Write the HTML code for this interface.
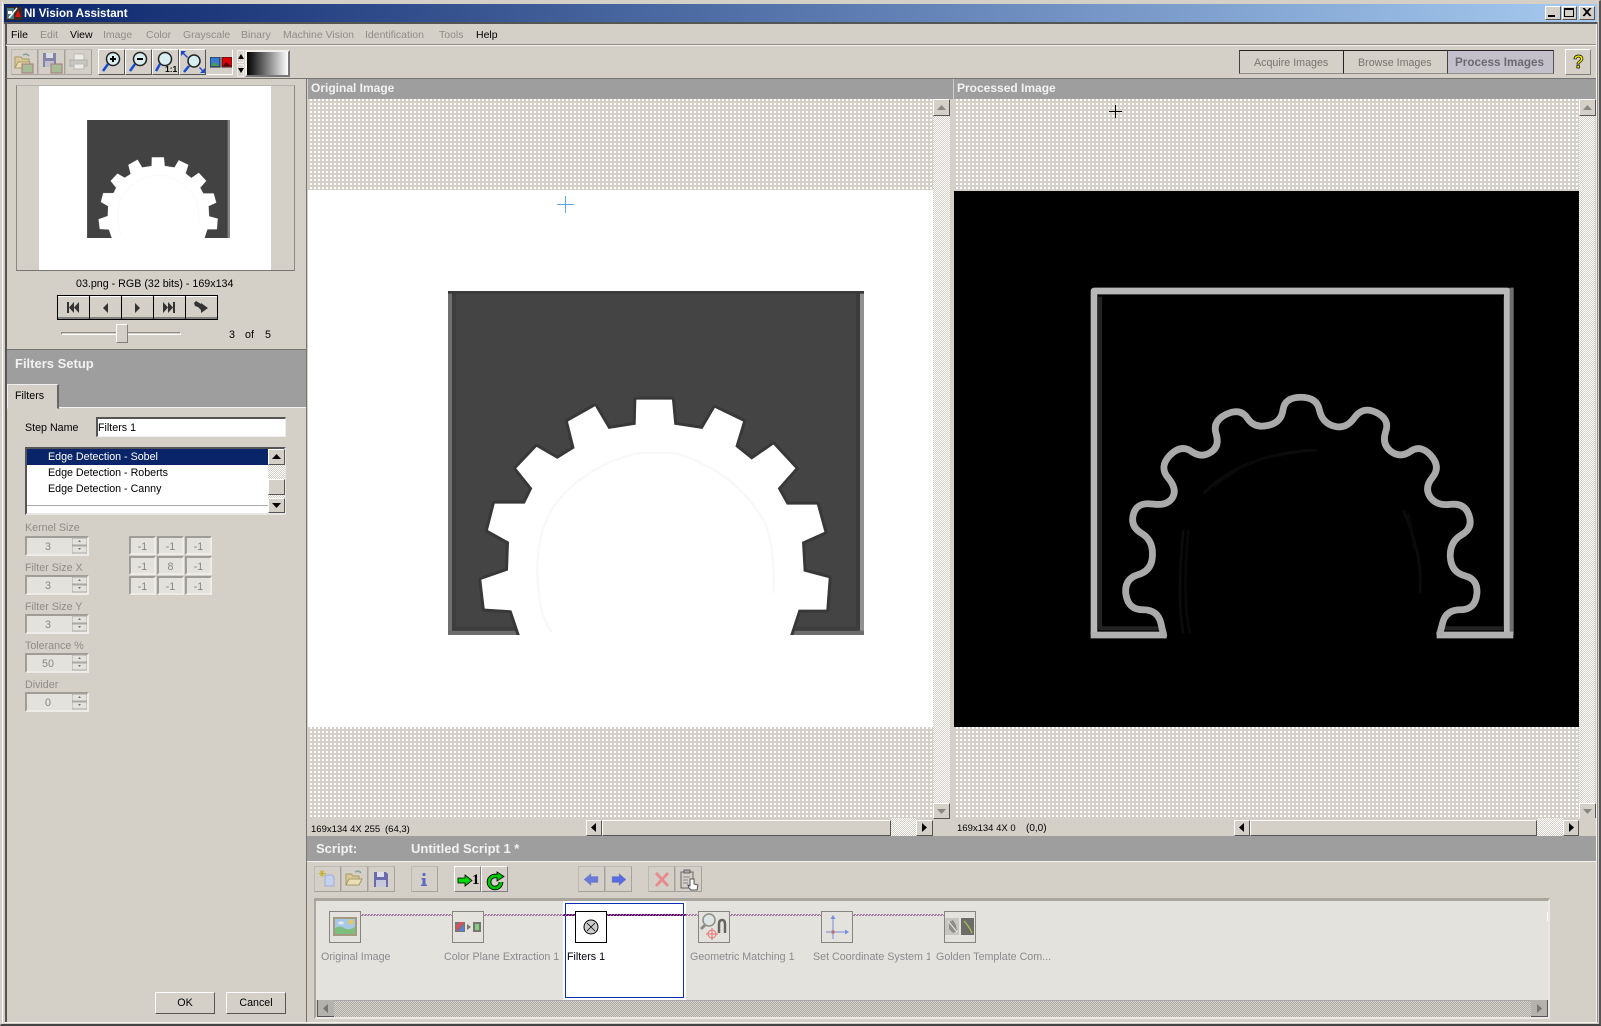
<!DOCTYPE html>
<html><head><meta charset="utf-8"><title>NI Vision Assistant</title>
<style>
html,body{margin:0;padding:0;width:1601px;height:1026px;overflow:hidden;background:#d4d0c8}
#r{position:relative;width:1601px;height:1026px;overflow:hidden;background:#d4d0c8;font:10.7px "Liberation Sans",sans-serif;color:#000}
#r div,#r svg{position:absolute;box-sizing:border-box}
.t{white-space:nowrap;line-height:14px;height:14px}
.g{color:#8f8d87}
.m{font-size:10.5px}
.h{font-weight:bold;color:#f2f2f2;font-size:12px}
.gray{background:#9e9e9e}
.dots{background-color:#d4d0c8;background-image:conic-gradient(#fff 25%,transparent 0);background-size:4px 4px}
.hat{background-color:#d4d0c8;background-image:conic-gradient(#fff 25%,#d4d0c8 0 50%,#fff 0 75%,#d4d0c8 0);background-size:2px 2px}
.hat2{background-color:#bdbab4;background-image:conic-gradient(#d6d3cd 25%,#aeaba5 0 50%,#d6d3cd 0 75%,#aeaba5 0);background-size:2px 2px}
.b{background:#d4d0c8;border:1px solid;border-color:#fff #555 #555 #fff}
.bf{background:#d4d0c8;border:1px solid;border-color:#bdbab3 #a5a29b #a5a29b #bdbab3}
.bu{background:#d4d0c8;border:1px solid;border-color:#fff #808080 #808080 #fff}
.sp{background:#e3e2dd;border:2px solid;border-color:#a09d97 #eeece8 #eeece8 #a09d97;color:#8a8780;text-align:center;line-height:18px}
.c{background:#e3e2dd;border:2px solid;border-color:#a09d97 #eeece8 #eeece8 #a09d97;color:#8a8780;text-align:center;line-height:18px}
.ib{background:#e3e2dd;border:1px solid #86847e}
</style></head><body><div id="r">

<!-- window frame -->
<div style="left:0;top:0;width:1601px;height:1026px;border:1px solid #d4d0c8;border-right:2px solid #555;border-bottom:2px solid #444"></div>
<div style="left:2px;top:2px;width:1px;height:1021px;background:#fff"></div>
<div style="left:5px;top:22px;width:2px;height:1000px;background:#555"></div>
<div style="left:1596px;top:22px;width:1px;height:1000px;background:#f4f2ee"></div>
<div style="left:1597px;top:22px;width:1px;height:1000px;background:#8f8d87"></div>
<div style="left:4px;top:1022px;width:1593px;height:1px;background:#f4f2ee"></div>

<!-- title bar -->
<div style="left:4px;top:4px;width:1593px;height:18px;background:linear-gradient(90deg,#0a246a,#a6caf0)"></div>
<div style="left:6px;top:7px;width:16px;height:13px;background:#3a2a1a"></div>
<svg style="left:6px;top:7px" width="16" height="13" viewBox="0 0 16 13"><rect x="1" y="1" width="7" height="11" fill="#4a7a8a"/><path d="M2 4h4v3h-4z" fill="#fff"/><path d="M3 11L11 1" stroke="#fff" stroke-width="1.5"/><path d="M9 10l3-7 3 7z" fill="#e01010"/></svg>
<div class="t" style="left:24px;top:7px;color:#fff;font-weight:bold;font-size:11.5px">NI Vision Assistant</div>
<div class="b" style="left:1545px;top:6px;width:16px;height:14px"></div><div style="left:1548px;top:15px;width:7px;height:2px;background:#000"></div>
<div class="b" style="left:1562px;top:6px;width:15px;height:14px"></div><div style="left:1564px;top:8px;width:10px;height:9px;border:1px solid #000;border-top-width:2px"></div>
<div class="b" style="left:1579px;top:6px;width:16px;height:14px"></div>
<svg style="left:1582px;top:8px" width="10" height="9"><path d="M1 0L8 8M2 0L9 8M8 0L1 8M9 0L2 8" stroke="#000"/></svg>
<div style="left:4px;top:22px;width:1593px;height:2px;background:#555"></div>

<!-- menu -->
<div class="t m" style="left:11px;top:28px">File</div>
<div class="t g m" style="left:40px;top:28px">Edit</div>
<div class="t m" style="left:70px;top:28px">View</div>
<div class="t g m" style="left:103px;top:28px">Image</div>
<div class="t g m" style="left:146px;top:28px">Color</div>
<div class="t g m" style="left:183px;top:28px">Grayscale</div>
<div class="t g m" style="left:241px;top:28px">Binary</div>
<div class="t g m" style="left:283px;top:28px">Machine Vision</div>
<div class="t g m" style="left:365px;top:28px">Identification</div>
<div class="t g m" style="left:439px;top:28px">Tools</div>
<div class="t m" style="left:476px;top:28px">Help</div>
<div style="left:6px;top:44px;width:1590px;height:1px;background:#8f8d87"></div>
<div style="left:6px;top:45px;width:1590px;height:1px;background:#f4f2ee"></div>

<!-- toolbar -->
<div class="bf" style="left:11px;top:49px;width:27px;height:26px"></div>
<div class="bf" style="left:38px;top:49px;width:27px;height:26px"></div>
<div class="bf" style="left:65px;top:49px;width:27px;height:26px"></div>
<svg style="left:14px;top:51px" width="24" height="24" viewBox="0 0 24 24"><path d="M1 6h6l2 2h6v9H1z" fill="#d8c898" stroke="#a89a6a"/><path d="M1 17l3-6h12l-2 6z" fill="#e8dcb0" stroke="#a89a6a"/><path d="M9 4q4-2 6 1" fill="none" stroke="#8aa0a0" stroke-width="1.5"/><rect x="8" y="13" width="11" height="9" fill="#a8bc98" stroke="#a87878"/></svg>
<svg style="left:42px;top:52px" width="21" height="22" viewBox="0 0 21 22"><path d="M1 1h13v14H1z" fill="#8484a8"/><rect x="4" y="1" width="7" height="5" fill="#dcdce4"/><rect x="3" y="9" width="9" height="6" fill="#c0c0d0"/><rect x="9" y="12" width="11" height="9" fill="#a8bc98" stroke="#a87878"/></svg>
<svg style="left:69px;top:53px" width="20" height="18" viewBox="0 0 20 18"><rect x="5" y="1" width="10" height="6" fill="#ecece8" stroke="#bab8b2"/><path d="M1 7h17v6H1z" fill="#c9c7c1" stroke="#aeaca6"/><rect x="5" y="11" width="10" height="5" fill="#ecece8" stroke="#bab8b2"/></svg>

<div class="b" style="left:98px;top:49px;width:27px;height:26px"></div>
<div class="b" style="left:125px;top:49px;width:27px;height:26px"></div>
<div class="b" style="left:152px;top:49px;width:27px;height:26px"></div>
<div class="b" style="left:179px;top:49px;width:27px;height:26px"></div>
<div style="left:206px;top:49px;width:27px;height:26px;border:1px solid;border-color:#d4d0c8 #fff #fff #d4d0c8;background:#d4d0c8"></div>
<svg style="left:100px;top:50px" width="24" height="24" viewBox="0 0 24 24"><circle cx="13" cy="9" r="6.5" fill="#d8eef0" stroke="#222" stroke-width="1.5"/><path d="M8 14L3 21" stroke="#1a4ad0" stroke-width="2.500"/><path d="M10 9h6M13 6v6" stroke="#000" stroke-width="2"/></svg>
<svg style="left:127px;top:50px" width="24" height="24" viewBox="0 0 24 24"><circle cx="13" cy="9" r="6.5" fill="#d8eef0" stroke="#222" stroke-width="1.5"/><path d="M8 14L3 21" stroke="#1a4ad0" stroke-width="2.500"/><path d="M10 9h6" stroke="#000" stroke-width="2"/></svg>
<svg style="left:154px;top:50px" width="24" height="24" viewBox="0 0 24 24"><circle cx="11" cy="9" r="6.5" fill="#d8eef0" stroke="#222" stroke-width="1.5"/><path d="M6 14L2 21" stroke="#1a4ad0" stroke-width="2.500"/></svg>
<div class="t" style="left:165px;top:64px;font-size:8.500px;font-weight:bold;line-height:10px;height:10px">1:1</div>
<svg style="left:180px;top:50px" width="26" height="24" viewBox="0 0 26 24"><circle cx="14" cy="11" r="6" fill="#d8eef0" stroke="#222" stroke-width="1.5"/><path d="M9 16L4 22" stroke="#1a4ad0" stroke-width="2.500"/><path d="M1 1h5l-2 2 4 4-1 1-4-4-2 2zM25 23h-5l2-2-3-3 1-1 3 3 2-2z" fill="#1a4ad0"/></svg>
<svg style="left:210px;top:57px" width="22" height="11" viewBox="0 0 22 11"><rect width="10" height="10" x="0" y="0" fill="#3a7ad0" stroke="#222"/><path d="M1 9l3-4 5 4z" fill="#4aa04a"/><rect width="10" height="10" x="12" y="0" fill="#e00000" stroke="#222"/><path d="M13 9l3-4 5 4z" fill="#500"/></svg>
<div style="left:237px;top:50px;width:7px;height:13px;background:#d8d4cc;border:1px solid #eee;color:#000"></div>
<svg style="left:238px;top:54px" width="6" height="5"><path d="M3 0l3 5H0z"/></svg>
<div style="left:237px;top:64px;width:7px;height:13px;background:#d8d4cc;border:1px solid #eee"></div>
<svg style="left:238px;top:68px" width="6" height="5"><path d="M0 0h6L3 5z"/></svg>
<div style="left:245px;top:50px;width:45px;height:27px;border:2px solid;border-color:#f2f0ec #777 #777 #f2f0ec;background:linear-gradient(90deg,#000,#fff)"></div>

<!-- right mode tabs -->
<div style="left:1239px;top:50px;width:105px;height:24px;border:1px solid;border-color:#222 #222 #8f8d87 #444"></div>
<div style="left:1344px;top:50px;width:103px;height:24px;border-top:1px solid #222;border-bottom:1px solid #8f8d87"></div>
<div style="left:1447px;top:50px;width:107px;height:24px;background:#c3c0cc;border:1px solid;border-color:#222 #555 #8f8d87 #444"></div>
<div class="t" style="left:1254px;top:56px;color:#77756f">Acquire Images</div>
<div class="t" style="left:1358px;top:56px;color:#77756f">Browse Images</div>
<div class="t" style="left:1455px;top:56px;color:#6a6a70;font-weight:bold;font-size:11.7px">Process Images</div>
<div class="bu" style="left:1565px;top:49px;width:26px;height:26px"></div>
<div class="t" style="left:1573px;top:52px;font-size:18px;font-weight:bold;color:#f8f000;line-height:20px;height:20px;-webkit-text-stroke:.7px #000">?</div>

<div style="left:6px;top:78px;width:1590px;height:1px;background:#77756f"></div>

<!-- left preview -->
<div style="left:16px;top:85px;width:279px;height:186px;border:1px solid;border-color:#b5b3ad #8a8882 #77756f #8a8882"></div>
<div style="left:39px;top:86px;width:232px;height:184px;background:#fff"></div>
<svg style="left:87px;top:120px" width="143" height="118" viewBox="84 -207 1248 1031"><rect x="84" y="-207" width="1248" height="1031" fill="#424242"/><rect x="1312" y="-207" width="20" height="1031" fill="#888"/><use href="#gear"/></svg>
<div class="t" style="left:76px;top:277px">03.png - RGB (32 bits) - 169x134</div>

<div style="left:57px;top:295px;width:161px;height:25px;border:1px solid #000;background:#d4d0c8;border-bottom-width:1px"></div>
<div style="left:58px;top:296px;width:159px;height:23px;background:#d4d0c8;border-top:1px solid #fff;border-bottom:2px solid #808080"></div>
<div style="left:89px;top:295px;width:1px;height:25px;background:#000"></div>
<div style="left:121px;top:295px;width:1px;height:25px;background:#000"></div>
<div style="left:153px;top:295px;width:1px;height:25px;background:#000"></div>
<div style="left:185px;top:295px;width:1px;height:25px;background:#000"></div>
<svg style="left:57px;top:295px" width="161" height="25" viewBox="0 0 161 25" fill="#333"><path d="M10 7h2v11h-2zM17 7v11l-5-5.500zM22 7v11l-5-5.500z"/><path d="M51 8v10l-5-5z"/><path d="M78 8v10l5-5z"/><path d="M106 7v11l5-5.500zM111 7v11l5-5.500zM116 7h2v11h-2z"/><path d="M137 8l2-2 5 3V8l7 5-7 5v-3l-3-3-3-1z"/></svg>

<div style="left:61px;top:332px;width:120px;height:3px;border:1px solid;border-color:#8f8d87 #fff #fff #8f8d87"></div>
<div class="bu" style="left:116px;top:324px;width:12px;height:19px"></div>
<div class="t" style="left:229px;top:328px">3</div><div class="t" style="left:245px;top:328px">of</div><div class="t" style="left:265px;top:328px">5</div>

<!-- Filters Setup -->
<div class="gray" style="left:7px;top:349px;width:299px;height:59px;border-top:1px solid #77756f"></div>
<div class="t h" style="left:15px;top:357px;font-size:13px">Filters Setup</div>
<div style="left:7px;top:384px;width:52px;height:25px;background:#d4d0c8;border:1px solid;border-color:#eee #666 #d4d0c8 #eee;border-right-width:2px"></div>
<div class="t" style="left:15px;top:389px">Filters</div>
<div style="left:59px;top:407px;width:247px;height:1px;background:#f4f2ee"></div>
<div style="left:306px;top:79px;width:1px;height:943px;background:#77756f"></div>

<div class="t" style="left:25px;top:421px">Step Name</div>
<div style="left:96px;top:417px;width:190px;height:20px;background:#fff;border:1px solid;border-color:#555 #eee #eee #555;border-width:2px 1px 1px 2px"></div>
<div class="t" style="left:98px;top:421px">Filters 1</div>

<div style="left:25px;top:447px;width:261px;height:68px;background:#fff;border:2px solid;border-color:#555 #e8e6e2 #e8e6e2 #555"></div>
<div style="left:27px;top:449px;width:241px;height:16px;background:#0a246a"></div>
<div class="t" style="left:48px;top:450px;color:#fff">Edge Detection - Sobel</div>
<div class="t" style="left:48px;top:466px">Edge Detection - Roberts</div>
<div class="t" style="left:48px;top:482px">Edge Detection - Canny</div>
<div style="left:27px;top:505px;width:241px;height:1px;background:#aaa"></div>
<div class="hat" style="left:268px;top:449px;width:17px;height:64px"></div>
<div class="b" style="left:268px;top:449px;width:17px;height:16px"></div><svg style="left:272px;top:454px" width="9" height="5"><path d="M4.500 0L9 5H0z"/></svg>
<div class="b" style="left:268px;top:479px;width:17px;height:16px"></div>
<div class="b" style="left:268px;top:498px;width:17px;height:15px"></div><svg style="left:272px;top:503px" width="9" height="5"><path d="M0 0h9L4.500 5z"/></svg>

<!-- params -->
<div class="t g" style="left:25px;top:521px">Kernel Size</div>
<div class="sp" style="left:25px;top:536px;width:64px;height:20px;padding-right:18px">3</div>
<div class="t g" style="left:25px;top:561px">Filter Size X</div>
<div class="sp" style="left:25px;top:575px;width:64px;height:20px;padding-right:18px">3</div>
<div class="t g" style="left:25px;top:600px">Filter Size Y</div>
<div class="sp" style="left:25px;top:614px;width:64px;height:20px;padding-right:18px">3</div>
<div class="t g" style="left:25px;top:639px">Tolerance %</div>
<div class="sp" style="left:25px;top:653px;width:64px;height:20px;padding-right:18px">50</div>
<div class="t g" style="left:25px;top:678px">Divider</div>
<div class="sp" style="left:25px;top:692px;width:64px;height:20px;padding-right:18px">0</div>
<svg style="left:72px;top:536px" width="15" height="176" viewBox="0 0 15 176"><g id="s"><rect y="2" width="15" height="7" fill="#e3e2dd" stroke="#aaa8a2"/><rect y="10" width="15" height="7" fill="#e3e2dd" stroke="#aaa8a2"/><path d="M6 6h3L7.500 4zM6 12h3L7.500 14z" fill="#77756f"/></g><use href="#s" y="39"/><use href="#s" y="78"/><use href="#s" y="117"/><use href="#s" y="156"/></svg>

<div class="c" style="left:129px;top:536px;width:27px;height:19px">-1</div>
<div class="c" style="left:157px;top:536px;width:27px;height:19px">-1</div>
<div class="c" style="left:185px;top:536px;width:27px;height:19px">-1</div>
<div class="c" style="left:129px;top:556px;width:27px;height:19px">-1</div>
<div class="c" style="left:157px;top:556px;width:27px;height:19px">8</div>
<div class="c" style="left:185px;top:556px;width:27px;height:19px">-1</div>
<div class="c" style="left:129px;top:576px;width:27px;height:19px">-1</div>
<div class="c" style="left:157px;top:576px;width:27px;height:19px">-1</div>
<div class="c" style="left:185px;top:576px;width:27px;height:19px">-1</div>

<div class="b" style="left:155px;top:992px;width:60px;height:22px;text-align:center;line-height:20px">OK</div>
<div class="b" style="left:226px;top:992px;width:60px;height:22px;text-align:center;line-height:20px">Cancel</div>

<!-- image headers -->
<div class="gray" style="left:308px;top:79px;width:645px;height:20px"></div>
<div class="gray" style="left:954px;top:79px;width:642px;height:20px"></div>
<div class="t h" style="left:311px;top:81px">Original Image</div>
<div class="t h" style="left:957px;top:81px">Processed Image</div>

<!-- left image pane -->
<div class="dots" style="left:308px;top:99px;width:625px;height:719px"></div>
<div style="left:308px;top:190px;width:625px;height:537px;background:#fff"></div>
<svg style="left:448px;top:291px" width="416" height="344" viewBox="84 -207 1248 1032">
<defs><g id="gear"><path d="M300 824L275 750 195 745 185 660 265 632 268 545 205 510 225 432 315 432 338 385 290 325 350 262 412 298 465 265 445 185 525 140 565 208 648 195 650 120 755 120 762 195 848 208 885 145 968 185 945 260 995 300 1060 255 1125 325 1072 385 1100 435 1190 435 1212 515 1145 545 1150 635 1225 655 1218 748 1135 748 1110 824Z" fill="#fff" stroke="#fff" stroke-width="2" stroke-linejoin="round"/><path d="M395 818Q355 760 352 640 350 520 400 440 490 320 650 280L770 280Q960 340 1040 500 1065 580 1060 700" fill="none" stroke="#f8f8f8" stroke-width="7"/></g></defs>
<rect x="84" y="-207" width="1248" height="1032" fill="#444"/>
<rect x="84" y="-207" width="12" height="1032" fill="#707070"/>
<rect x="96" y="-207" width="12" height="1020" fill="#3e3e3e"/>
<rect x="1320" y="-207" width="12" height="1032" fill="#929292"/>
<rect x="1308" y="-207" width="12" height="1020" fill="#3c3c3c"/>
<rect x="84" y="-207" width="1248" height="8" fill="#3a3a3a"/>
<rect x="84" y="812" width="1248" height="13" fill="#6c6c6c"/>
<rect x="96" y="800" width="1224" height="12" fill="#3c3c3c"/>
<path d="M300 824L275 750 195 745 185 660 265 632 268 545 205 510 225 432 315 432 338 385 290 325 350 262 412 298 465 265 445 185 525 140 565 208 648 195 650 120 755 120 762 195 848 208 885 145 968 185 945 260 995 300 1060 255 1125 325 1072 385 1100 435 1190 435 1212 515 1145 545 1150 635 1225 655 1218 748 1135 748 1110 824" fill="none" stroke="#383838" stroke-width="20" stroke-linejoin="round"/>
<use href="#gear"/>
</svg>
<svg style="left:557px;top:196px" width="17" height="17"><path d="M8.500 0v17M0 8.500h17" stroke="#58a8f0" stroke-width="1"/></svg>

<!-- right image pane -->
<div class="dots" style="left:954px;top:99px;width:625px;height:719px"></div>
<div style="left:954px;top:191px;width:625px;height:536px;background:#000"></div>
<svg style="left:1070px;top:270px" width="460" height="400" viewBox="0 -300 1380 1200">
<g fill="none" stroke-linejoin="round">
<path d="M90 -220V775H275M1110 775H1305V-220" stroke="#242424" stroke-width="12"/>
<path d="M72 795V-237H1312V795" stroke="#b8b8b8" stroke-width="20"/>
<path d="M1325 -247V795" stroke="#6e6e6e" stroke-width="12"/>
<path d="M62 795H290M1100 795H1330" stroke="#b0b0b0" stroke-width="20"/>
<path d="M340 790Q320 690 340 480M1050 670Q1060 560 1000 420M400 370Q520 250 740 240" stroke="#0c0c0c" stroke-width="8"/>
<path d="M360 790Q335 690 355 480M1035 540L1015 430M430 350Q540 260 640 255" stroke="#090909" stroke-width="8"/>
<path transform="translate(690 500) scale(1.02) translate(-690 -500)" d="M290 795L281 755Q272 715 228 715Q185 715 178 670Q172 625 213 612Q255 600 256 555Q258 510 224 490Q190 470 200 434Q210 398 255 404Q300 410 315 385Q330 360 302 327Q275 295 307 261Q340 228 370 249Q400 270 427 252Q455 235 443 197Q432 160 473 140Q515 120 535 151Q555 182 595 173Q635 165 640 127Q645 90 692 90Q740 90 747 127Q755 165 790 175Q825 185 850 150Q875 115 915 135Q955 155 942 191Q930 228 957 249Q985 270 1015 249Q1045 228 1075 261Q1105 295 1080 325Q1055 355 1072 382Q1090 410 1132 405Q1175 400 1187 437Q1200 475 1165 495Q1130 515 1132 560Q1135 605 1175 615Q1215 625 1210 670Q1205 715 1162 715Q1120 715 1110 752L1100 790" stroke="#aaa" stroke-width="20"/>
</g></svg>
<svg style="left:1107px;top:103px" width="17" height="17"><path d="M8.500 2v13M2 8.500h13" stroke="#000" stroke-width="1"/></svg>

<!-- vertical scrollbars -->
<div class="hat" style="left:933px;top:116px;width:17px;height:687px"></div>
<div class="hat" style="left:1579px;top:116px;width:16px;height:687px"></div>
<div class="b" style="left:933px;top:99px;width:17px;height:17px"></div><svg style="left:937px;top:105px" width="9" height="5"><path d="M4.500 0L9 5H0z" fill="#8a8882"/></svg>
<div class="b" style="left:933px;top:803px;width:17px;height:16px"></div><svg style="left:937px;top:809px" width="9" height="5"><path d="M0 0h9L4.500 5z" fill="#8a8882"/></svg>
<div class="b" style="left:1579px;top:99px;width:17px;height:17px"></div><svg style="left:1583px;top:105px" width="9" height="5"><path d="M4.500 0L9 5H0z" fill="#8a8882"/></svg>
<div class="b" style="left:1579px;top:803px;width:17px;height:16px"></div><svg style="left:1583px;top:809px" width="9" height="5"><path d="M0 0h9L4.500 5z" fill="#8a8882"/></svg>

<!-- status -->
<div style="left:308px;top:818px;width:625px;height:18px;background:#d4d0c8"></div>
<div style="left:954px;top:818px;width:642px;height:18px;background:#d4d0c8"></div>
<div class="t" style="left:311px;top:823px;font-size:9.500px">169x134 4X 255</div>
<div class="t" style="left:385px;top:823px;font-size:9.500px">(64,3)</div>
<div class="t" style="left:957px;top:822px;font-size:9.500px">169x134 4X 0</div>
<div class="t" style="left:1026px;top:822px;font-size:10px">(0,0)</div>

<!-- h scrollbars -->
<div class="b" style="left:586px;top:820px;width:16px;height:16px"></div><svg style="left:591px;top:823px" width="5" height="9"><path d="M5 0v9L0 4.500z"/></svg>
<div class="b" style="left:602px;top:820px;width:289px;height:16px"></div>
<div class="hat" style="left:891px;top:818px;width:25px;height:18px"></div>
<div class="b" style="left:916px;top:820px;width:17px;height:16px"></div><svg style="left:922px;top:823px" width="5" height="9"><path d="M0 0v9L5 4.500z"/></svg>
<div class="b" style="left:1234px;top:820px;width:16px;height:16px"></div><svg style="left:1239px;top:823px" width="5" height="9"><path d="M5 0v9L0 4.500z"/></svg>
<div class="b" style="left:1250px;top:820px;width:287px;height:16px"></div>
<div class="hat" style="left:1537px;top:818px;width:26px;height:18px"></div>
<div class="b" style="left:1563px;top:820px;width:16px;height:16px"></div><svg style="left:1569px;top:823px" width="5" height="9"><path d="M0 0v9L5 4.500z"/></svg>

<!-- script header -->
<div class="gray" style="left:307px;top:836px;width:1289px;height:25px"></div>
<div style="left:307px;top:861px;width:1289px;height:1px;background:#f4f2ee"></div>
<div class="t h" style="left:316px;top:842px;font-size:13px">Script:</div>
<div class="t h" style="left:411px;top:842px;font-size:13px">Untitled Script 1 *</div>

<!-- script toolbar -->
<div class="bf" style="left:314px;top:866px;width:27px;height:26px"></div>
<div class="bf" style="left:341px;top:866px;width:27px;height:26px"></div>
<div class="bf" style="left:368px;top:866px;width:27px;height:26px"></div>
<div class="bf" style="left:411px;top:866px;width:27px;height:26px"></div>
<div class="b" style="left:454px;top:866px;width:27px;height:26px;border-right-color:#808080;border-bottom-color:#808080"></div>
<div class="b" style="left:481px;top:866px;width:27px;height:26px;border-right-color:#808080;border-bottom-color:#808080"></div>
<div class="bf" style="left:578px;top:866px;width:27px;height:26px"></div>
<div class="bf" style="left:605px;top:866px;width:27px;height:26px"></div>
<div class="bf" style="left:648px;top:866px;width:27px;height:26px"></div>
<div class="bf" style="left:675px;top:866px;width:27px;height:26px"></div>
<svg style="left:314px;top:866px" width="400" height="26" viewBox="0 0 400 26">
<path d="M11 9h7l2 2v9H11z" fill="#c4d0ec" stroke="#a0aed0"/><path d="M8 4v7M5 7.500h7M6 5l4 5M10 5l-4 5" stroke="#c8b030"/>
<path d="M32 8h5l2 2h6v9H32z" fill="#d8c898" stroke="#a89a6a"/><path d="M32 19l3-6h13l-3 6z" fill="#eadfb4" stroke="#a89a6a"/><path d="M41 6q4-2 6 1" fill="none" stroke="#8aa0a0" stroke-width="1.500"/>
<path d="M60 6h12l2 2v13H60z" fill="#6c6cac"/><rect x="63" y="6" width="7" height="5" fill="#dcdcea"/><rect x="62" y="14" width="10" height="7" fill="#c8c8dc"/>
<circle cx="110" cy="8.500" r="1.600" fill="#5a6ac8"/><path d="M107.500 12h4v6.500h1.500V20h-6v-1.500h1.500V13.500h-1z" fill="#5a6ac8"/>
<path d="M144 12h7V9l7 5.500-7 5.500v-3h-7z" fill="#00d800" stroke="#000" stroke-width=".8"/>
<g fill="none"><path d="M187 16A6 6 0 1 1 181 10H184" stroke="#000" stroke-width="4.600"/></g>
<path d="M183 6L190 10.500 183 15z" fill="#00c800" stroke="#000" stroke-width=".8"/>
<path d="M187 16A6 6 0 1 1 181 10H184" fill="none" stroke="#00c800" stroke-width="2.800"/>
<path d="M270 13.500l7-6v3h7v6h-7v3z" fill="#6a7ad8" stroke="#8090b0" stroke-width=".5"/>
<path d="M312 13.500l-7-6v3h-7v6h7v3z" fill="#5a6ae0" stroke="#8090b0" stroke-width=".5"/>
<path d="M342 7l12 13M354 7L342 20" stroke="#e88a90" stroke-width="2.800"/>
<rect x="367" y="6" width="12" height="16" fill="#d4d0c8" stroke="#666"/><rect x="370" y="4" width="6" height="3" fill="#aaa" stroke="#666"/><path d="M369 11h7M369 14h5M369 17h5" stroke="#888"/>
<path d="M376 13v7l-2-1 1 3 2 2h6l1-5-4-1v-5z" fill="#fff" stroke="#555"/>
</svg>
<div class="t" style="left:472px;top:872px;font:bold 15px 'Liberation Serif',serif;line-height:16px;height:16px">1</div>

<!-- strip -->
<div style="left:314px;top:898px;width:1236px;height:121px;border:2px solid;border-color:#a9a69f #ece9e4 #ece9e4 #a9a69f;border-top-width:3px"></div>
<div style="left:316px;top:901px;width:1232px;height:99px;background:#e3e2dd"></div>
<div style="left:563px;top:901px;width:123px;height:99px;background:#fff"></div>
<div style="left:565px;top:903px;width:119px;height:95px;border:1px solid #0a2eb5"></div>
<svg style="left:361px;top:912px" width="600" height="6" viewBox="0 0 600 6"><g fill="none"><path d="M0 3.500H583" stroke="#a47aa4" stroke-dasharray="2 1"/><path d="M1 2.500H583" stroke="#a47aa4" stroke-dasharray="2 1"/><path d="M202 3.500H325" stroke="#5a0a6a" stroke-dasharray="2 1"/><path d="M203 2.500H325" stroke="#5a0a6a" stroke-dasharray="2 1"/></g></svg>

<div class="ib" style="left:329px;top:911px;width:32px;height:32px"></div>
<svg style="left:333px;top:916px" width="24" height="22" viewBox="0 0 24 22"><rect width="24" height="19" y="1" fill="#a49a80"/><rect x="2" y="3" width="20" height="15" fill="#a8c8e8"/><path d="M2 18v-6q5-3 9 0t11-1v7z" fill="#7cbf7c"/><circle cx="18" cy="6" r="2.500" fill="#e8c860"/><ellipse cx="8" cy="7" rx="3" ry="1.500" fill="#e8e8e8"/></svg>
<div class="ib" style="left:452px;top:911px;width:32px;height:32px"></div>
<svg style="left:455px;top:921px" width="26" height="12" viewBox="0 0 26 12"><rect width="10" height="10" y="1" fill="#77756f"/><path d="M1 10L9 2V1H5L1 5z" fill="#d85060"/><path d="M3 10L9 4v6z" fill="#5a80d8"/><path d="M12 3l4 3-4 3z" fill="#77756f"/><rect x="18" y="1" width="8" height="10" fill="#77756f"/><rect x="20" y="3" width="4" height="6" fill="#80d080"/></svg>
<div style="left:575px;top:911px;width:32px;height:32px;background:#fff;border:1px solid #000"></div>
<svg style="left:583px;top:919px" width="16" height="16" viewBox="0 0 16 16"><circle cx="8" cy="8" r="7" fill="#ccc" stroke="#000"/><path d="M4 4l8 8M12 4l-8 8" stroke="#000" stroke-width=".8"/></svg>
<div class="ib" style="left:698px;top:911px;width:32px;height:32px"></div>
<svg style="left:699px;top:912px" width="30" height="30" viewBox="0 0 30 30"><circle cx="10" cy="8" r="6" fill="#dce4e4" stroke="#8f8d87" stroke-width="1.500"/><path d="M6 13L2 17" stroke="#8f8d87" stroke-width="3"/><path d="M20 21v-9q0-4 3-4t3 4v9" fill="none" stroke="#66645e" stroke-width="2.500"/><circle cx="13" cy="22" r="4" fill="none" stroke="#e87070"/><path d="M13 16v12M7 22h12" stroke="#e87070"/></svg>
<div class="ib" style="left:821px;top:911px;width:32px;height:32px"></div>
<svg style="left:821px;top:911px" width="32" height="32" viewBox="0 0 32 32"><path d="M12 5v23M5 21h22" stroke="#7a8ae0"/><path d="M12 4l-2.500 4h5zM28 21l-4-2.500v5z" fill="#7a8ae0"/><rect x="10.500" y="19.500" width="3" height="3" fill="#c07060"/></svg>
<div class="ib" style="left:944px;top:911px;width:32px;height:32px"></div>
<svg style="left:945px;top:917px" width="30" height="20" viewBox="0 0 30 20"><rect x="0" y="1" width="14" height="17" fill="#c8c6c0"/><path d="M4 5l4-2 3 5 1 6-4 2-4-4z" fill="#8f8d87"/><path d="M3 4l9 11" stroke="#e8e8e4"/><rect x="16" y="1" width="13" height="17" fill="#6e6c66"/><path d="M19 4q5 5 8 12" stroke="#a8d850" fill="none"/></svg>

<div class="t" style="left:321px;top:950px;color:#8c8a90">Original Image</div>
<div class="t" style="left:444px;top:950px;color:#8c8a90">Color Plane Extraction 1</div>
<div class="t" style="left:567px;top:950px;color:#001">Filters 1</div>
<div class="t" style="left:690px;top:950px;color:#8c8a90">Geometric Matching 1</div>
<div class="t" style="left:813px;top:950px;color:#8c8a90;width:117px;overflow:hidden">Set Coordinate System 1</div>
<div class="t" style="left:936px;top:950px;color:#8c8a90">Golden Template Com...</div>

<div class="hat2" style="left:334px;top:1000px;width:1197px;height:17px;border-top:1px solid #aaa"></div>
<div style="left:317px;top:1000px;width:17px;height:17px;background:#b4b2ac;border-bottom:1px solid #555;border-left:1px solid #555"></div><svg style="left:323px;top:1004px" width="5" height="9"><path d="M5 0v9L0 4.500z" fill="#77756f"/></svg>
<div style="left:1531px;top:1000px;width:17px;height:17px;background:#b4b2ac;border-bottom:1px solid #555;border-right:1px solid #555"></div><svg style="left:1537px;top:1004px" width="5" height="9"><path d="M0 0v9L5 4.500z" fill="#77756f"/></svg>
<div style="left:1547px;top:912px;width:1px;height:9px;background:#fff"></div>

</div></body></html>
